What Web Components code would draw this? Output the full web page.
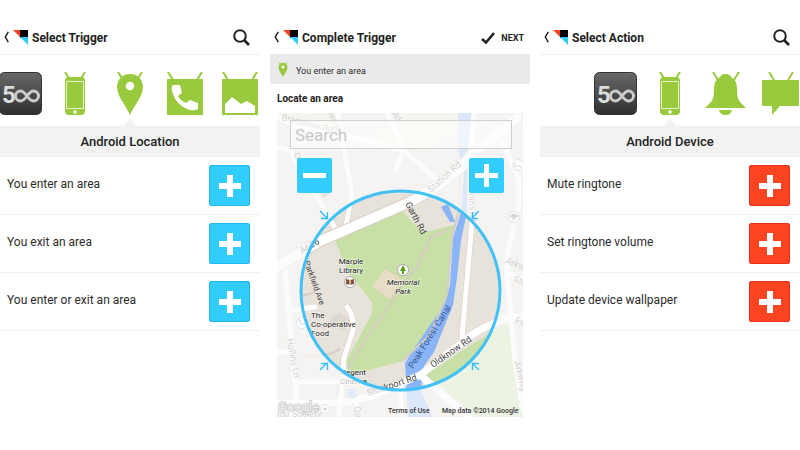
<!DOCTYPE html>
<html lang="en">
<head>
<meta charset="utf-8">
<meta name="viewport" content="width=device-width, initial-scale=1">
<title>Recipe setup</title>
<style>
  body { margin: 0; background: #fff; color: #2b2b2b; font-family: Roboto, "Liberation Sans", sans-serif; }
</style>
</head>
<body>
<app-board>
  <app-screen>
    <app-header slot="header" heading="Select Trigger" action="search" ruled></app-header>
    <channel-strip icons="px500 phone pin call picture"></channel-strip>
    <channel-banner>Android Location</channel-banner>
    <option-row>You enter an area</option-row>
    <option-row>You exit an area</option-row>
    <option-row>You enter or exit an area</option-row>
  </app-screen>
  <app-screen>
    <app-header slot="header" heading="Complete Trigger" action="next"></app-header>
    <trigger-summary>You enter an area</trigger-summary>
    <area-picker heading="Locate an area"></area-picker>
  </app-screen>
  <app-screen>
    <app-header slot="header" heading="Select Action" action="search" ruled></app-header>
    <channel-strip icons="none px500 phone bell chat"></channel-strip>
    <channel-banner>Android Device</channel-banner>
    <option-row tone="red">Mute ringtone</option-row>
    <option-row tone="red">Set ringtone volume</option-row>
    <option-row tone="red">Update device wallpaper</option-row>
  </app-screen>
</app-board>
<script>
const G = '#99c93c';
const antennae = (a, b) => `<path d="M${a} 0l5 8M${b} 0l-5 8" stroke="${G}" stroke-width="2"/>`;
const ICONS = {
  none: '',
  px500: `<svg width="43" height="43" viewBox="0 0 43 43"><defs><linearGradient id="g" x2="0" y2="1"><stop stop-color="#686868"/><stop offset="1" stop-color="#303030"/></linearGradient></defs>
    <rect x=".5" y=".5" width="42" height="42" rx="5" fill="url(#g)" stroke="#333"/>
    <text x="3" y="31" font-family="Roboto" font-weight="700" font-size="24" fill="#ddd">5</text>
    <path d="M28 24C25.500 20.500 24 19 21.500 19a5 5 0 0 0 0 10C24 29 25.500 27.500 28 24S32 19 34.500 19a5 5 0 0 1 0 10C32 29 30.500 27.500 28 24Z" fill="none" stroke="#ccc" stroke-width="3"/></svg>`,
  phone: `<svg width="22" height="43" viewBox="0 0 22 43">${antennae(1, 21)}
    <rect x="1" y="5" width="20" height="38" rx="4" fill="${G}"/><path d="M2.500 9.500H19.500V36.500H2.500Z" fill="none" stroke="#e6f2c8"/><circle cx="11" cy="40" r="1.700" fill="#fff"/></svg>`,
  pin: `<svg width="28" height="43" viewBox="0 0 28 43">${antennae(2, 26)}
    <path d="M14 2C6 2 1 8 1 15C1 24 10 34 14 43C18 34 27 24 27 15C27 8 22 2 14 2Z" fill="${G}"/><circle cx="14" cy="14" r="4.300" fill="#fff"/></svg>`,
  call: `<svg width="36" height="43" viewBox="0 0 36 43">${antennae(1, 35)}
    <path d="M0 7H36V43H0Z" fill="${G}"/><path d="M6 13L13 13L15 21L11 24Q14 29 19 31L23 28L31 31V37Q28 39 23 38Q9 34 5 19Q4 15 6 13Z" fill="#fff"/></svg>`,
  picture: `<svg width="36" height="43" viewBox="0 0 36 43">${antennae(1, 35)}
    <path d="M0 7H36V43H0Z" fill="${G}"/><path d="M3 41V32L10 25L19 32L25 29L33 34V41Z" fill="#fff"/></svg>`,
  bell: `<svg width="41" height="43" viewBox="0 0 41 43">${antennae(8, 34)}
    <path d="M20.500 2Q25 2 26 5Q32 8 32 17Q32 27 35 30L41 36H0L6 30Q9 27 9 17Q9 8 15 5Q16 2 20.500 2Z" fill="${G}"/><path d="M14 38H27Q26 43 20.500 43T14 38Z" fill="${G}"/></svg>`,
  chat: `<svg width="37" height="43" viewBox="0 0 37 43">${antennae(7, 31)}
    <path d="M1 8H36Q37 8 37 9V33Q37 34 36 34H18L10 43V34H1Q0 34 0 33V9Q0 8 1 8Z" fill="${G}"/></svg>`
};
const NAMES = { px500: '500px', phone: 'Android Device', pin: 'Android Location', call: 'Phone Call', picture: 'Photos', bell: 'Notifications', chat: 'SMS' };
const RESET = `*{box-sizing:border-box}button{font:inherit;color:inherit;background:none;border:0;padding:0;cursor:pointer}svg{display:block}`;

function define(name, render) {
  customElements.define(name, class extends HTMLElement {
    constructor() {
      super();
      const t = document.createElement('template');
      t.innerHTML = render(this);
      this.attachShadow({ mode: 'open' }).append(t.content.cloneNode(true));
    }
  });
}

define('app-board', () => `<style>
  :host{display:grid;grid-template-columns:repeat(3,minmax(0,1fr));gap:10px;padding-top:20px}
</style><slot></slot>`);

define('app-screen', () => `<style>
  :host{display:flex;flex-direction:column;min-width:0}
</style><slot name="header"></slot><slot></slot>`);

define('app-header', el => `<style>${RESET}
  :host{display:flex;align-items:center;height:34px;padding:0 10px 0 4px;box-sizing:content-box}
  :host([ruled]){border-bottom:1px solid #f0f0f0;}
  :host([action=next]){padding-right:6px}
  .back{display:flex;align-items:center;gap:4px}
  h1{flex:1;margin:2px 0 0 4px;font-size:12px;line-height:16px;font-weight:700;white-space:nowrap;color:#222}
  .next{display:flex;align-items:center;gap:6px;padding-top:2px;font-size:9px;line-height:12px;font-weight:700;color:#222}
</style>
<button class="back" aria-label="Back">
  <svg width="5" height="12" viewBox="0 0 5 12"><path d="M4.300 .8L1.300 6L4.300 11.200" fill="none" stroke="#222" stroke-width="1.500"/></svg>
  <svg width="15" height="15" viewBox="0 0 15 15"><path d="M0 0H8V8Z" fill="#ff4320"/><path d="M7 0H15V8H7Z" fill="#000"/><path d="M7 7H15V15Z" fill="#33ccff"/></svg>
</button>
<h1>${el.getAttribute('heading')}</h1>
${el.getAttribute('action') === 'next'
  ? `<button class="next"><svg width="14" height="12" viewBox="0 0 14 12"><path d="M1 7L5 10.500L13 1" fill="none" stroke="#222" stroke-width="2.600"/></svg>NEXT</button>`
  : `<button aria-label="Search"><svg width="17" height="17" viewBox="0 0 17 17" fill="none" stroke="#222"><circle cx="7" cy="7" r="5.800" stroke-width="2"/><path d="M11 11L16 16" stroke-width="2.600"/></svg></button>`}`);

define('channel-strip', el => `<style>${RESET}
  :host{display:grid;grid-template-columns:repeat(5,55px);justify-content:center;overflow:hidden;padding:17px 0 11px}
  button,span{display:flex;justify-content:center;height:43px}
</style>${el.getAttribute('icons').split(' ').map(n => n === 'none' ? '<span></span>' : `<button aria-label="${NAMES[n]}">${ICONS[n]}</button>`).join('')}`);

define('channel-banner', () => `<style>
  :host{display:block;position:relative;background:#f2f2f2;text-align:center}
  :host::before{content:"";position:absolute;left:50%;bottom:100%;margin-left:-7px;border:7px solid transparent;border-top:0;border-bottom-color:#f2f2f2}
  h2{margin:0;font-size:13px;line-height:31px;font-weight:500;color:#222}
</style><h2><slot></slot></h2>`);

const plus = '<svg width="22" height="24" viewBox="0 0 22 24"><path d="M8 1H14V9H22V15H14V23H8V15H0V9H8Z" fill="#fff"/></svg>';
const plusThin = '<svg width="23" height="23" viewBox="0 0 23 23"><path d="M9 0H14V9H23V14H14V23H9V14H0V9H9Z" fill="#fff"/></svg>';
define('option-row', () => `<style>${RESET}
  :host{--fill:#33ccff;--edge:#20b8f4;display:flex;align-items:center;justify-content:space-between;height:58px;padding:0 10px 0 7px;border-bottom:1px solid #f0f0f0;box-sizing:border-box}
  :host([tone=red]){--fill:#ff4422;--edge:#e83018}
  label{font-size:12px;line-height:16px;padding-bottom:4px}
  button{display:grid;place-items:center;flex:none;width:41px;height:41px;border-radius:3px;background:var(--fill);box-shadow:inset 0 0 0 1px var(--edge)}
</style><label for="add"><slot></slot></label><button id="add" aria-label="Add">${plus}</button>`);

define('trigger-summary', () => `<style>${RESET}
  :host{display:flex;align-items:center;gap:8px;height:30px;padding:0 8px;background:#eaeaea;font-size:9px;line-height:12px}
  p{margin:4px 0 0}
  svg{width:10px;height:15px}
</style>${ICONS.pin}<p><slot></slot></p>`);

define('area-picker', el => `<style>${RESET}
  :host{display:block;padding:0 7px}
  h2{margin:0;padding:9px 0 8px;font-size:10px;line-height:12px;font-weight:700;color:#222}
  .map{position:relative}
  .over{position:absolute;inset:7px 11px auto 13px}
  input{display:block;width:100%;height:29px;border:1px solid #d0d0d0;border-radius:0;background:#ffffff8c;padding:0 4px;font:400 17px/22px Roboto,"Liberation Sans",sans-serif;outline:0}
  input::placeholder{color:#c8c8c8;opacity:1}
  .zoom{display:flex;justify-content:space-between;padding:9px 8px 0 7px}
  .zoom button{display:grid;place-items:center;width:35px;height:35px;border-radius:2px;background:#33ccff}
</style>
<h2>${el.getAttribute('heading')}</h2>
<div class="map"><area-map></area-map>
  <div class="over"><input type="search" placeholder="Search" aria-label="Search">
    <div class="zoom"><button aria-label="Smaller area"><svg width="23" height="5"><path d="M0 0H23V5H0Z" fill="#fff"/></svg></button>
    <button aria-label="Larger area">${plusThin}</button></div></div>
</div>`);

// Map drawn on a free canvas; x 277-523, y 113-417.
define('area-map', () => `<style>
  :host{display:block}
  svg{display:block;width:100%;height:auto}
  text{font-family:Roboto,"Liberation Sans",sans-serif}
</style>
<svg viewBox="277 113 246 304" role="img" aria-label="Map of the chosen area">
  <path d="M277 113H523V417H277Z" fill="#e7e2da"/>
  <path d="M277 113H335L340 137L300 128L277 117ZM357 145L420 152L455 128L452 113H410Z" fill="#e4e4d4"/>
  <path d="M335 240L400 208L422 233L445 227L455 225L452 248L447 295L430 335L403 361L350 375L346 362L372 313L372 302L348 272Z" fill="#c8dfa6"/>
  <path d="M426 375L463 350L507 323L523 385V417H476Z" fill="#c8dfa6"/>
  <path d="M372 287L385 269L403 280L390 299Z" fill="#e8dcc4"/>
  <path d="M327 323L339 312L352 322L344 331Z" fill="#dcd7cf"/>
  <path d="M441 207L448 204L455 222H450Z" fill="#8ab4f8"/>
  <path d="M458 113H474L472 140L467 155V212L461 240L457 278L453 305L434 352L424 366L421 390L432 417H408L405 363L413 350L444 305L450 285L453 238L461 212L464 175L458 150Z" fill="#8ab4f8"/>
  <path d="M460 175L459 210L452 236L447 295L430 335L402 361" fill="none" stroke="#d6cec2" stroke-width="2"/>
  <path d="M447 230L430 238L417 268L402 285L383 315L368 335L348 368M303 296L315 292M300 357L330 354L340 349" fill="none" stroke="#d6cdc2" stroke-width="2"/>
  <g fill="none" stroke-linejoin="round" stroke-linecap="round">
    <g stroke="#d6cfc4" stroke-width="6"><path d="M347 307Q354 315 353 330L344 358L339 395M472 185V222L462 338M338 113L352 195L346 225M335 228L290 150"/></g>
    <g stroke="#fff" stroke-width="5"><path d="M277 117Q292 123 300 128L350 137L405 151L437 180M338 113L352 195L346 225M277 147L290 150L335 228M403 151L396 169M387 113L404 150M497 128L519 180L519 205L508 250L507 275L515 360L523 410M474 113L470 155M472 180V222L462 338M347 307Q354 315 353 330L344 358L339 415M285 270L297 405M277 352H290M290 310L315 307M300 382H350M510 274L523 280M355 402L360 417M401 387V417"/></g>
    <path d="M277 267L320 241L410 202Q450 181 472 155L517 118" stroke="#d8d0c6" stroke-width="12"/>
    <path d="M277 267L320 241L410 202Q450 181 472 155L517 118" stroke="#fff" stroke-width="10"/>
    <path d="M277 403H340L370 397L420 375L463 342Q475 330 507 318L523 316M420 375L478 425M277 405L300 417" stroke="#fff" stroke-width="7"/>
  </g>
  <g font-size="9" fill="#444">
    <g fill="#666">
      <text x="281" y="120" transform="rotate(14 281 120)">Bradshaw Rd</text>
      <text x="328" y="114" transform="rotate(65 328 114)">ley Rd</text>
      <text x="391" y="114" transform="rotate(50 391 114)">Rd</text>
      <text x="293" y="155" transform="rotate(55 293 155)">Oak Crescent</text>
      <text x="431" y="193" transform="rotate(-42 431 193)">Station Rd</text>
      <text x="469" y="182" transform="rotate(88 469 182)" font-size="8">Martin's Rd</text>
      <text x="287" y="339" transform="rotate(80 287 339)">Hollins Ln</text>
      <text x="505" y="263" transform="rotate(22 505 263)">Arkw</text>
      <text x="513" y="281" transform="rotate(22 513 281)">Sto</text>
      <text x="515" y="323" transform="rotate(12 515 323)">Fa</text>
      <text x="514" y="362" transform="rotate(76 514 362)">Arkwrig</text>
      <text x="354" y="407" transform="rotate(75 354 407)">Qu</text>
      <text x="277" y="417">Ido Society</text>
    </g>
    <text x="302" y="254" transform="rotate(-31 302 254)">A626</text>
    <text x="405" y="204" transform="rotate(62 405 204)">Garth Rd</text>
    <text x="304" y="262" transform="rotate(70 304 262)" font-size="8">Parkfield Ave</text>
    <text x="413" y="369" transform="rotate(-58 413 369)" fill="#345b96">Peak Forest Canal</text>
    <text x="433" y="368" transform="rotate(-35 433 368)">Oldknow Rd</text>
    <text x="368" y="396" transform="rotate(-18 368 396)">Stockport Rd</text>
  </g>
  <g font-size="8" fill="#222" stroke="#fff" stroke-width="1.500" stroke-opacity=".6" paint-order="stroke">
    <g text-anchor="middle"><text x="351" y="264">Marple</text><text x="351" y="273">Library</text>
    <g font-style="italic"><text x="403" y="285">Memorial</text><text x="403" y="294">Park</text></g></g>
    <text x="311" y="318">The</text><text x="311" y="327">Co-operative</text><text x="311" y="336">Food</text>
    <text x="341" y="375">Regent</text><text x="340" y="384">Cinema</text>
  </g>
  <g fill="#fff" stroke="#aaa"><circle cx="350" cy="282" r="5.500"/><circle cx="403" cy="270" r="5.500"/><circle cx="302" cy="323" r="5.500"/><circle cx="352" cy="393" r="5.500"/><circle cx="325" cy="409" r="4.500"/><circle cx="518" cy="165" r="5.500"/><circle cx="514" cy="217" r="5.500"/></g>
  <path d="M346 279L350 280L354 279V284L350 285L346 284Z" fill="#825439"/><path d="M350 280V285" stroke="#fff"/>
  <path d="M403 265L406 271H404V274H402V271H400Z" fill="#58a015"/>
  <path d="M298 320H300L301 324H305L306 321M349 390H355V396H349ZM352 390V396M349 393H355" fill="none" stroke="#5590dd"/>
  <path d="M515 163V168M515 166H521V168" fill="none" stroke="#a88"/><path d="M510 216L514 214L518 216L514 218ZM512 219H516" fill="#777" stroke="#777"/><circle cx="325" cy="409" r="1.500" fill="#865"/>
  <path fill-rule="evenodd" fill="#fbfbfb" fill-opacity=".72" d="M277 113H523V417H277ZM301.500 290.500a99 99 0 0 0 198 0a99 99 0 0 0-198 0Z"/>
  <circle cx="400.500" cy="290.500" r="99.500" fill="none" stroke="#42c1f7" stroke-width="3"/>
  <g fill="none" stroke="#35bdf5" stroke-width="1.400"><path d="M320 211L327 218M321 218.500H327.500V212M479 211L472 218M478 218.500H472.500V212M320 370L327 363M321 363.500H327.500V370M479 370L472 363M479 363.500H472.500V370"/></g>
  <text x="278" y="411" font-size="13" fill="#f4f4f4" stroke="#bbb" stroke-width="1.200" paint-order="stroke">Google</text>
  <g font-size="7" font-weight="500" fill="#333"><text x="388" y="413">Terms of Use</text><text x="442" y="413">Map data ©2014 Google</text></g>
</svg>`);
</script>
</body>
</html>
